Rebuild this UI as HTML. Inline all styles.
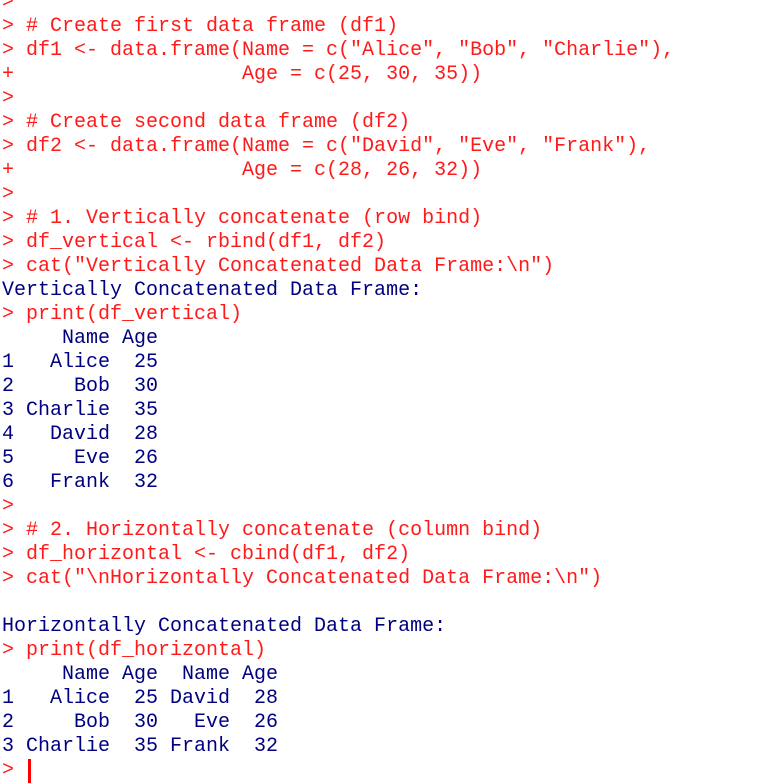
<!DOCTYPE html>
<html><head><style>
html,body{margin:0;padding:0;background:#fff;width:773px;height:781px;overflow:hidden}
pre{margin:0;position:absolute;left:2px;top:-9px;font-family:"Liberation Mono",monospace;font-size:20px;line-height:24px;color:#000080;letter-spacing:0}
.r{color:#ff1a1a}
.c{display:inline-block;width:3px;height:24px;background:#ff0000;vertical-align:top;margin-left:2px}
</style></head><body>
<pre><span class="r">&gt;
&gt; # Create first data frame (df1)
&gt; df1 &lt;- data.frame(Name = c("Alice", "Bob", "Charlie"),
+                   Age = c(25, 30, 35))
&gt;
&gt; # Create second data frame (df2)
&gt; df2 &lt;- data.frame(Name = c("David", "Eve", "Frank"),
+                   Age = c(28, 26, 32))
&gt;
&gt; # 1. Vertically concatenate (row bind)
&gt; df_vertical &lt;- rbind(df1, df2)
&gt; cat("Vertically Concatenated Data Frame:\n")</span>
Vertically Concatenated Data Frame:
<span class="r">&gt; print(df_vertical)</span>
     Name Age
1   Alice  25
2     Bob  30
3 Charlie  35
4   David  28
5     Eve  26
6   Frank  32
<span class="r">&gt;
&gt; # 2. Horizontally concatenate (column bind)
&gt; df_horizontal &lt;- cbind(df1, df2)
&gt; cat("\nHorizontally Concatenated Data Frame:\n")</span>

Horizontally Concatenated Data Frame:
<span class="r">&gt; print(df_horizontal)</span>
     Name Age  Name Age
1   Alice  25 David  28
2     Bob  30   Eve  26
3 Charlie  35 Frank  32
<span class="r">&gt; </span><span class="c"></span></pre>
</body></html>
